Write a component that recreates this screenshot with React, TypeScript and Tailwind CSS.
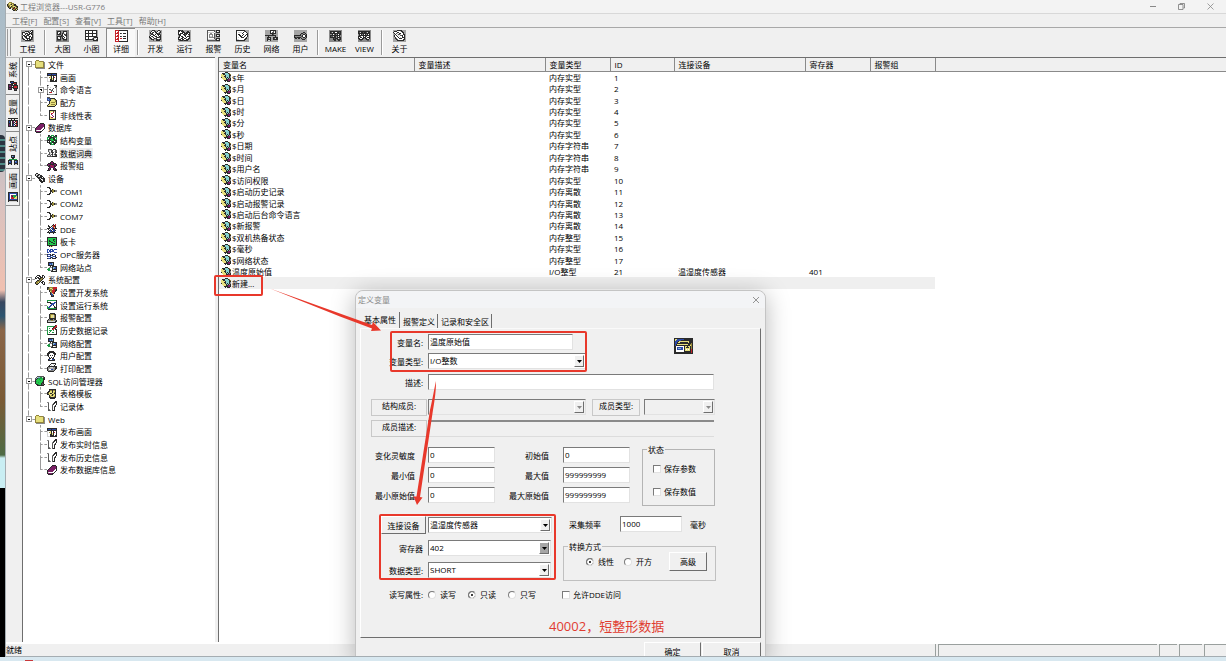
import { useState, type ReactNode } from "react"
import clsx from "clsx"

const palette: Record<string, string> = {
  k: "#2a2a2a",
  d: "#565656",
  g: "#8a8a8a",
  a: "#a6a6a6",
  l: "#d2d2d2",
  w: "#ffffff",
  y: "#e6df7c",
  o: "#94863a",
  r: "#c4232b",
  b: "#2c4aa8",
  s: "#7fb4cf",
  c: "#86d3d0",
  n: "#1f9a45",
  e: "#22cc4c",
  m: "#7a1f66",
}

const icons: Record<string, string[]> = {
  logo: ["..ooo.......", ".oyyooo.....", "koyokyokk...", "kooyyookko..", "okoykoyyokk.", ".kokoookyok.", "..kk.okroko.", ".....kookyk.", "......kkok.."],
  folder: ["..........", ".ooo......", "oyyyoooog.", "oyyyyyyyog", "oyyyyyyyog", "oyyyyyyyog", "oyyyyyyyog", "oyyyyyyyog", "ooooooooog", ".ggggggggg"],
  screen: ["..........", "kkkkkkkkkk", "kbbbkbbbbk", "kkkkkkkkkk", "lwwykwkwwk", "lwoykwkrwk", "lwwykykwwk", "lwwkkykwwk", "lwwkkkkwkk", "lllkkkkkkk"],
  script: ["kg.....kkk", "g.......gk", "glwlwwwwdg", "gwwwwwdwwg", "gwddwdwwwg", "gwwlddwwwg", "gwwwdwdwwg", "gwdrrwwwwg", "gwwwwwwwwg", "kgggggggkk"],
  recipe: ["ddd.......", "bbdkkkkk..", "bsbbyyyok.", "dbbkyyyyok", "..kyyyyyok", "..kyooooyk", "..kyyyyyyk", ".kyyooooyk", "kyyyyyyyk.", "okkkkkkk.."],
  curve: ["..kkkkkkk.", "..kyyydyk.", "..kywwrwk.", "..kwrrwwk.", "..kwmwwwk.", "..kwwmwwk.", "..kywwmwk.", "..kyrmwwk.", "..kyyyyyk.", "..kkkkkkk."],
  db: [".....kkkk.", "....kmmmmk", "...kmmmmmk", "..kmmmmmmk", ".kmmmmmmwk", "kmmmmmmwwk", "kmmmmmwwk.", "klwwwwwk..", "kmmmmkk...", ".kkkkk...."],
  struct: [".kk.nnn.kk", ".kdkn.nkdk", "nnnkkkknnn", "n.kknekk.n", "nnkeeekknn", "kkkkneekkk", "kwk.nkk.nk", "kkknnkkkkk", "..kkn.nkk.", "...knnnk.."],
  dict: ["..........", ".dddd.ddd.", ".dlldkwwdd", ".dlwkdwldd", "..dldkdwdk", "..dlwkwld.", ".ddldkldkd", "dlldwdwldk", "dddddkkkkk", ".........."],
  alarm: ["....kk....", "...kmmk...", ".kkkmmkkk.", "kmmkkkkmmk", "kmkmrmmkmk", ".kkmmrmkk.", "..kmmmmk..", ".kmk..kmk.", ".kmk..kmkk", "kkk....kkk"],
  device: [".kk.......", "kllkk.....", "klkklkk...", ".kkllkkk..", "..kkkkkwk.", "...kklkkkk", "....kkwlkk", "....kkkwkk", ".....kkkkk", "......kk.."],
  com: ["..........", "kkk.......", "..kk......", "...k.ky...", "...kkookgg", "...kkookgg", "...k.ky...", "..kk......", "kkk.......", ".........."],
  dde: ["......k.r.", ".k...krkr.", ".kk.kyrrk.", "..kkwbryk.", "kkkwbbkrkk", ".kwbwkbk..", "..kbkwbbk.", ".kwbbkbk..", "kkkkkkkkk.", "..k...k..."],
  card: ["kkkkkkkkkk", "keeeeeeeek", "keeeeekkek", "kekeeekeek", "kekkeeekek", "keeekkeeek", "kekeeekkek", "keeeeeeeek", "kkkkkkkkkk", "..kyky...."],
  opc: ["bb.bbb.bbb", "b.bb.bb...", "b.bbbbb...", "bb.b...bbb", "..........", "kbbk.kkb..", "b..kbk..k.", "kbbb.sbbk.", "...bkb..bk", "kbbk.kkkk."],
  net: [".kkkkkk...", ".kbbbsk...", ".kbsbsk...", ".kkkkkk...", "...kwkkkkk", "..gggkssbk", ".nn..ksbbk", "nnn..kkkkk", ".nnggkwwlk", "....kkkkkk"],
  tools: ["..kkk..kk.", ".kwwkk.kwk", "kwkkwkkkwk", "kk.kkkook.", "....kook..", "..kkook...", ".koook.kk.", "kooyk.kkwk", "kook...kwk", ".kk.....kk"],
  devset: ["kkoooorrrr", "kdoyyorrrr", "kooooyrrdk", "..koorrrkk", "..kyorrrk.", "...korrk..", "...kbyrk..", "...kbby...", "....kbk...", "....kkk..."],
  runset: ["nnnnnnnnnk", "nwwwwwwwwk", "kkkkwwwbbk", "wwwkkbbbwk", "wwwwbbbwwk", "wwwbbwkwwk", "nwbbwwwkwk", "nbbwwwwkkk", "nnnnnnnnnk", ".kkkkkkkkk"],
  bell: ["...kkkkk..", "..kooookk.", "..koyylok.", "..koyylok.", "..koyylok.", "..kkkkkkk.", ".kgkkkgkk.", "kgggoogggk", "klllllllkk", "kkkkkkkkk."],
  hist: ["........kr", "nnnnnnnkrr", "nwwwwwkrrk", "nwnwwkrrk.", "nwwwwrrwkk", "nwnnnwnwwk", "nwwnwwwwwk", "nwnwwnnwwk", "nwwwwwwwwk", "nkkkkkkkkk"],
  user: ["..kkkkk...", ".kkkkkkk..", "kkkwwwkkk.", "kkwwwwwkk.", "kkwkwkwk..", ".kwwwwwk..", "..kwkwk...", "..kkwkk...", ".kbwwbbk..", ".kkkkkkk.."],
  print: ["....kkkkk.", "...kwwlwk.", "..kwlwwk..", ".kkkkkkkkk", "kgglllgakk", "kaaaaaagkk", "kgwwbbagk.", "kggggggk..", ".kkkkkk...", ".........."],
  sql: ["..ddddddd.", ".dlssnnldk", "dsknnnnekk", "dkeeneeekk", "keeeeneek.", "kneeeeenk.", "keeneeekk.", "kneeeekdk.", ".kkneekddk", "..kkkkkkk."],
  template: ["..kkkkkkk.", "..kookook.", ".kkyykyyk.", "kkyyykyok.", "koykkyykk.", "kkyyykoyk.", "..kyokyyk.", "..koyyyok.", "..kkkkkkk.", "...kkkkk.."],
  record: ["........kk", "gg.....kkk", ".d....dk.k", ".d...gk..k", ".d...d..k.", ".d...d.dk.", ".d...d.k..", ".d...d.k..", ".dg..d.k..", ".ddg.dkk.."],
  tag: ["....kkk...", ".kkkcccko.", "yykkccccko", "yyyykccckk", "yyykkccckg", "kyyykckckg", ".yyyykckgk", "..yyykkmmk", "...kkkkmmk", "....k.kkk."],
  sideSys: ["..kkkk....", "..kbbkkkk.", "...kkkrrk.", "kkkkk.kkk.", "kmmkkkkkkk", "kmmk.krrrk", "kkkkkkrrrk", "kmmk.kkkkk", "kkkk..kmk.", "......kkk."],
  sideVar: ["kkkkkkkkkk", "...k..k...", "kkkkkkkkkk", "kbk.km.krk", "kbk.kmk.rk", "kkk.kk.kkk", "kmk.kbk.rk", "kmk.kb.krk", "kkkkkkkkkk", ".........."],
  sideSite: ["...kkkk...", "...ksbk...", "...kkkk...", "....kk....", ".nnnnnnnn.", "kkkk..kkkk", "ksbk..ksbk", "kbbk..kbbk", "kkkk..kkkk", "kllk..kllk"],
  sideScreen: ["kkkkkkkkkk", "kbbbbbbbbk", "kbwwwwwwbk", "kbwmmnnnbk", "kbwmkennyk", "kbwrrreyyk", "kbwrrryyyk", "kbbbbbbbbk", "kkkkkkkkkk", "kllllllllk"],
  preview: ["kkkkkkkkkkkkkkkkkkk", "kyybbbbbbbkkkkkkkkk", "kybbbbbkkkkkkkkkkkk", "kbbbkyyyyyyyyyykkkk", "kbbkyykkkkkkkkykkkk", "kbbkkkkkkkkkkkkkkok", "kbkyyyyyyyyyyykkook", "kbkkkkkkkkkkkkkkyok", "kkwwwwwwwwkyykyykok", "kkwbbbbbbwkykkkykok", "kkwbsssbbwkyyyyykok", "kkwbbbbbbwkywywykrk", "kkwwwwwwwwkyyyyykrk", "kkwwwwwwwwkkkkkkkrk", "kkkkkkkkkkkkkkkkkrk", "kkkkkkkkkkkkkkkkkkk"],
  tProject: ["aaaaaaaaaakka", "aaaakkkkakwka", "akkkwlwdkwkka", "akwldkkwkkkda", "akwwkwdkkwkka", "aakkwdkkwlwka", "akwkkkwlkkwka", "akwlkkwwkwkka", "akdwlkkkkwkda", "aakkwwkwkkkda", "aaaakkkkkkaaa", "aaaaaaaaaaaaa"],
  tLarge: ["ggggggggggggg", "gkkkkggkkkkgg", "gklwkggkwwdgg", "gkwdkgkdlwkgg", "gkkkkgkwkdkgg", "gggggkkwlkkgg", "gkkkkkdkwwkgg", "gkwlkgkwkwdgg", "gklwkgkklwkgg", "gkkkkggkkkkgg", "gddddggddddgg", "ggggggggggggg"],
  tSmall: ["kkkkkkkkkkkka", "kwwkwwwkwwwka", "kwwkwwwkwwwka", "kkkkkkkkkkkka", "kwwkwwwkwwwka", "kwwkwwwkwwwka", "kkkkkkkkkkkka", "kwwkwwwwgkkkk", "kwwkwwwgkllwk", "kkkkkkkkklwdk", "aaaaaaaakkkkk", "aaaaaaaaaaaaa"],
  tDetail: ["rrrrkkkkkkkkk", "rwwrwwwwwwwwk", "rwrrwwwwwwwwk", "rrrrwkdwkkkwk", "rwwrwwwwwwwwk", "rwrrwwwwwwwwk", "rrrrwkdwkkkwk", "rwwrwwwwwwwwk", "rwrrwrrwkkkwk", "rrrrwwwwwwwwk", "rwwrwwwwwwwwk", "rrrrkkkkkkkkk"],
  tDev: ["aaakkkaaakkaa", "aakwwdkakwlka", "akwdkwkkwldka", "akdkwwlkkdkaa", "aakkdwkwkkkda", "akwwkkwlwkwka", "kwdkwlkkwlkka", "kkwlkwwdkkdka", "akkwlkdkwwlka", "aakkkaakkdkka", "aaaadaakkkkaa", "aaaaaaaaaaaaa"],
  tRun: ["kkkdkaaaaaaaa", "kkwkkkaaakkaa", "kwwwkkkakkkka", "kwkkkwkkkkwka", "kkkwwkkdkwkka", "akkwwwkkwwlka", "akwkkwwkwkkka", "kkwwkkwwkwwka", "kwlkkwkkwwkka", "kkkwkkwwkkkaa", "adkkkdkkkkaaa", "aaaaaaaaaaaaa"],
  tAlarm: ["ddddddddakkkk", "dwwwwwwdakwlk", "dllllllwakkkk", "dwwggwwdaaaaa", "dwggggwdakkkk", "dwgwwgwdakwlk", "dwgllgwdakkkk", "dwgggggdaaaaa", "dwwwwwwdakkkk", "dllllllldkwlk", "dddddddddkkkk", "aaaaaaaaaaaaa"],
  tHistory: ["kkkkkkkkkaaaa", "kwwwwwwwdkaaa", "kwllllwkwwkaa", "kwwwwwkwwwwka", "kwkkwwwkwwkka", "kwwkkwkwwkwka", "kwwwkkwwkwwka", "kwlwwkkkwwkaa", "kwwwwwwwwkkaa", "kllwwwwwkkaaa", "kkkkkkkkkaaaa", "aaaaaaaaaaaaa"],
  tNet: ["aaaaakkkkkkaa", "aaaaakwwdlkaa", "aaaaakwddwkaa", "aaaaakkkkkkaa", "aaaaaaakdaaaa", "kkkkkkkkkkkaa", "aaakaaaaaakaa", "aakkkkaakkkkk", "aakdlkaakdlkk", "aakkkkaakkkkk", "aakllkaaaaaaa", "aaaaaaaaaaaaa"],
  tUser: ["aaaaaaaaaaaaa", "aaaaaaaaaaaaa", "aaaaaaaaakkaa", "aaaaaaakkggka", "aaaaaakggkkgk", "kkkkkkkgkwwkk", "kggggggdkwwkk", "kkdkkkkggkkgk", "akkakkakgggka", "aaaaaaaakkkaa", "aaaaaaaaaaaaa", "aaaaaaaaaaaaa"],
  tMake: ["ggggggggggggg", "gkkkkkkkkkkkg", "gkdlkkwwkkdkg", "gkkkkkkkkkkkg", "gggkwdkgkwkkg", "gkkkkkkkkkkgg", "gkddlkkgkwkgg", "gkkkkkkgkkkkg", "ggggkdkkkldkg", "ggggkkkgkkkkg", "gggggkkggkkgg", "ggggggggggggg"],
  tView: ["ggggggggggggg", "kkkkkkkkkkkkg", "kdlkkdkkdlkkg", "kkkkkkkkkkkkg", "gkwkgkwkgkwkg", "gkkkkkkkkkkkg", "kkdwwkwkdwwkg", "kwkkwkkkwkkkg", "kkwwkkgkkwwkg", "gkkkkgggkkkgg", "ggddgggggddgg", "ggggggggggggg"],
  tAbout: ["aaaakkkkkaaaa", "akkkwwwlkkaaa", "kwwwkkwwwkkaa", "akwdlwkkwwkaa", "aakwlddlwwkka", "akwkwlwddkwka", "akwwkwlwwkwka", "aakwwkwlwkkka", "aakdwwkkkwwka", "aaakdwwwwwkka", "aaaakkkkkkkaa", "aaaaaaaaaaaaa"],
}

function Pixels({ name }: { name: string }) {
  const rows = icons[name]
  const width = rows[0].length
  return (
    <svg
      width={width}
      height={rows.length}
      viewBox={`0 0 ${width} ${rows.length}`}
      shapeRendering="crispEdges"
      className="shrink-0"
      aria-hidden="true"
    >
      {rows.flatMap((row, y) =>
        row.split("").map((c, x) =>
          palette[c] ? <rect key={`${x}-${y}`} x={x} y={y} width="1" height="1" fill={palette[c]} /> : null
        )
      )}
    </svg>
  )
}

const menus = ["工程[F]", "配置[S]", "查看[V]", "工具[T]", "帮助[H]"]

const toolGroups = [
  [["tProject", "工程"]],
  [["tLarge", "大图"], ["tSmall", "小图"], ["tDetail", "详细"]],
  [["tDev", "开发"], ["tRun", "运行"], ["tAlarm", "报警"], ["tHistory", "历史"], ["tNet", "网络"], ["tUser", "用户"]],
  [["tMake", "MAKE"], ["tView", "VIEW"]],
  [["tAbout", "关于"]],
]

const sideTabs = [
  ["sideSys", "系统"],
  ["sideVar", "变量"],
  ["sideSite", "站点"],
  ["sideScreen", "画面"],
]

const tree = [
  { icon: "folder", label: "文件", items: [["screen", "画面"], ["script", "命令语言"], ["recipe", "配方"], ["curve", "非线性表"]] },
  { icon: "db", label: "数据库", items: [["struct", "结构变量"], ["dict", "数据词典"], ["alarm", "报警组"]] },
  {
    icon: "device",
    label: "设备",
    items: [["com", "COM1"], ["com", "COM2"], ["com", "COM7"], ["dde", "DDE"], ["card", "板卡"], ["opc", "OPC服务器"], ["net", "网络站点"]],
  },
  {
    icon: "tools",
    label: "系统配置",
    items: [
      ["devset", "设置开发系统"],
      ["runset", "设置运行系统"],
      ["bell", "报警配置"],
      ["hist", "历史数据记录"],
      ["net", "网络配置"],
      ["user", "用户配置"],
      ["print", "打印配置"],
    ],
  },
  { icon: "sql", label: "SQL访问管理器", items: [["template", "表格模板"], ["record", "记录体"]] },
  { icon: "folder", label: "Web", items: [["screen", "发布画面"], ["record", "发布实时信息"], ["record", "发布历史信息"], ["db", "发布数据库信息"]] },
]

const columns = ["变量名", "变量描述", "变量类型", "ID", "连接设备", "寄存器", "报警组"]

const variables = [
  ["$年", "内存实型", "1"],
  ["$月", "内存实型", "2"],
  ["$日", "内存实型", "3"],
  ["$时", "内存实型", "4"],
  ["$分", "内存实型", "5"],
  ["$秒", "内存实型", "6"],
  ["$日期", "内存字符串", "7"],
  ["$时间", "内存字符串", "8"],
  ["$用户名", "内存字符串", "9"],
  ["$访问权限", "内存实型", "10"],
  ["$启动历史记录", "内存离散", "11"],
  ["$启动报警记录", "内存离散", "12"],
  ["$启动后台命令语言", "内存离散", "13"],
  ["$新报警", "内存离散", "14"],
  ["$双机热备状态", "内存整型", "15"],
  ["$毫秒", "内存实型", "16"],
  ["$网络状态", "内存整型", "17"],
  ["温度原始值", "I/O整型", "21", "温湿度传感器", "401"],
  ["新建..."],
]

function Branch({ up = true, down = true, stub = true, box }: { up?: boolean; down?: boolean; stub?: boolean; box?: "+" | "-" }) {
  return (
    <span className="relative flex w-3 shrink-0 self-stretch pl-[5px]">
      <span className="flex flex-1 flex-col">
        <span
          className={clsx(
            "flex-1 border-dashed border-[#9a9a9a]",
            up && "border-l",
            stub && "border-b"
          )}
        />
        <span className={clsx("flex-1 border-dashed border-[#9a9a9a]", down && "border-l")} />
      </span>
      {box && (
        <span className="absolute top-1/2 left-[3px] flex size-[6px] -translate-y-1/2 items-center justify-center border border-[#9a9a9a] bg-white">
          <span className="h-px w-[2px] bg-black" />
          {box === "+" && <span className="absolute h-[2px] w-px bg-black" />}
        </span>
      )}
    </span>
  )
}

function Tree() {
  const [selected, setSelected] = useState("数据词典")
  return (
    <nav className="flex h-[418px] flex-col" aria-label="工程目录">
      {tree.flatMap((group, g) => {
        const lastGroup = g === tree.length - 1
        return [
          <div key={group.label} className="flex min-h-0 flex-1 items-center">
            <Branch up={g > 0} down={!lastGroup} box="-" />
            <Pixels name={group.icon} />
            <button className="ml-[3px]">{group.label}</button>
          </div>,
          ...group.items.map(([icon, label], i) => (
            <div key={group.label + label} className="flex min-h-0 flex-1 items-center">
              <Branch up={!lastGroup} down={!lastGroup} stub={false} />
              <Branch down={i < group.items.length - 1} box={label === "命令语言" ? "+" : undefined} />
              <Pixels name={icon} />
              <button
                onClick={() => setSelected(label)}
                className={clsx("ml-[2px] px-px", selected === label && "bg-[#ececec]")}
              >
                {label}
              </button>
            </div>
          )),
        ]
      })}
    </nav>
  )
}

function VariableTable() {
  return (
    <table className="h-[231px] w-full table-fixed border-collapse text-left">
      <colgroup>
        <col className="w-[195px]" />
        <col className="w-[131px]" />
        <col className="w-[65px]" />
        <col className="w-[64px]" />
        <col className="w-[131px]" />
        <col className="w-[65px]" />
        <col className="w-[65px]" />
        <col />
      </colgroup>
      <thead>
        <tr className="h-[13px] bg-[#f0f0f0]">
          {columns.map((c) => (
            <th key={c} className="h-[13px] border-r border-b border-[#8a8a8a] py-0 pr-0 pl-1 font-normal">
              {c}
            </th>
          ))}
          <td className="border-b border-[#8a8a8a]" />
        </tr>
      </thead>
      <tbody>
        {variables.map(([name, type, id, device, register]) => {
          const bg = name === "新建..." ? "bg-[#efefef]" : ""
          return (
            <tr key={name}>
              <td className={clsx("p-0 pl-[2px]", bg)}>
                <span className="flex items-center gap-px">
                  <Pixels name="tag" />
                  {name}
                </span>
              </td>
              <td className={bg} />
              <td className={clsx("p-0 pl-1", bg)}>{type}</td>
              <td className={clsx("p-0 pl-1", bg)}>{id}</td>
              <td className={clsx("p-0 pl-1", bg)}>{device}</td>
              <td className={clsx("p-0 pl-1", bg)}>{register}</td>
              <td className={bg} />
              <td />
            </tr>
          )
        })}
      </tbody>
    </table>
  )
}

const sunken = "border border-t-[#7a7a7a] border-l-[#7a7a7a] border-r-[#e2e2e2] border-b-[#e2e2e2]"
const raised = "border border-t-white border-l-white border-r-[#6e6e6e] border-b-[#6e6e6e]"

function TextField({ id, value, className }: { id: string; value?: string; className: string }) {
  return <input id={id} defaultValue={value} className={clsx("h-4 bg-white px-px pb-[2px] outline-none", sunken, className)} />
}

function Picker({ id, value, className, disabled, dark }: { id: string; value?: string; className: string; disabled?: boolean; dark?: boolean }) {
  return (
    <span className={clsx("relative flex h-4 shrink-0", sunken, disabled ? "bg-[#f0f0f0]" : "bg-white", className)}>
      <select id={id} disabled={disabled} className="min-w-0 flex-1 appearance-none bg-transparent px-px pb-px outline-none">
        <option>{value}</option>
      </select>
      <span
        className={clsx(
          "pointer-events-none absolute top-px right-px bottom-px flex w-[10px] items-center justify-center",
          raised,
          dark ? "bg-[#a6a6a6]" : "bg-[#f0f0f0]"
        )}
      >
        <svg width="5" height="3" viewBox="0 0 5 3">
          <path d="M0 0h5L2.5 3z" fill={disabled ? "#8a8a8a" : "#000"} />
        </svg>
      </span>
    </span>
  )
}

function Label({ htmlFor, className, children }: { htmlFor: string; className?: string; children: ReactNode }) {
  return (
    <label htmlFor={htmlFor} className={clsx("shrink-0 text-right", className)}>
      {children}
    </label>
  )
}

function Check({ label }: { label: string }) {
  return (
    <label className="flex items-center gap-[3px]">
      <input type="checkbox" className={clsx("size-2 shrink-0 appearance-none bg-white checked:bg-black", sunken)} />
      {label}
    </label>
  )
}

function Radio({ name, label, checked }: { name: string; label: string; checked?: boolean }) {
  return (
    <label className="flex items-center gap-1">
      <input
        type="radio"
        name={name}
        defaultChecked={checked}
        className={clsx("size-2 shrink-0 appearance-none rounded-full bg-white checked:bg-black checked:shadow-[inset_0_0_0_2px_#fff]", sunken)}
      />
      {label}
    </label>
  )
}

function DefineDialog() {
  return (
    <div
      role="dialog"
      aria-label="定义变量"
      className="absolute top-[290px] left-[355px] w-[411px] rounded-t-lg border border-[#c4c4c4] bg-[#f0f0f0] shadow-[0_4px_24px_rgba(0,0,0,0.28)]"
    >
      <header className="flex h-[17px] items-center justify-between rounded-t-lg bg-[#f3f4f6] pr-[5px] pl-[2px] text-[#8a8a8a]">
        <span>定义变量</span>
        <button aria-label="关闭">
          <svg width="8" height="8" viewBox="0 0 8 8" stroke="#8a8a8a" strokeWidth="0.9">
            <path d="M1 1l6 6M7 1l-6 6" />
          </svg>
        </button>
      </header>

      <div className="flex h-5 items-end pt-1 pl-1">
        <button className="h-4 border-r border-[#6e6e6e] pr-[3px] pb-px pl-1">基本属性</button>
        <button className="h-[14px] border-r border-[#6e6e6e] pr-[2px] pl-[3px]">报警定义</button>
        <button className="h-[14px] border-r border-[#6e6e6e] pr-[2px] pl-[3px]">记录和安全区</button>
      </div>

      <form className="mx-1 h-[310px] border border-t-[#fafafa] border-r-[#6e6e6e] border-b-[#6e6e6e] border-l-white pt-[5px]">
        <div className="flex items-start">
          <div className="flex flex-col gap-[3px]">
            <div className="flex items-center gap-[5px]">
              <Label htmlFor="name" className="w-[62px]">变量名:</Label>
              <TextField id="name" value="温度原始值" className="w-[145px]" />
            </div>
            <div className="flex items-center gap-[5px]">
              <Label htmlFor="type" className="w-[62px]">变量类型:</Label>
              <Picker id="type" value="I/O整数" className="w-[158px]" />
            </div>
          </div>
          <span className="mt-1 ml-[88px]">
            <Pixels name="preview" />
          </span>
        </div>
        <div className="mt-[5px] flex items-center gap-[5px]">
          <Label htmlFor="desc" className="w-[62px]">描述:</Label>
          <TextField id="desc" className="w-[286px]" />
        </div>

        <div className="mt-[9px] flex gap-px pl-[10px]">
          <Label htmlFor="member" className="h-[17px] w-14 border border-[#c8c8c8] pr-[10px]">结构成员:</Label>
          <Picker id="member" className="w-[158px]" disabled />
          <Label htmlFor="memberType" className="ml-[5px] h-[17px] w-12 border border-[#c8c8c8] pr-[6px]">成员类型:</Label>
          <Picker id="memberType" className="ml-[3px] w-[71px]" disabled />
        </div>
        <div className="mt-1 flex gap-px pl-[10px]">
          <Label htmlFor="memberDesc" className="h-[17px] w-14 border border-[#c8c8c8] pr-[10px]">成员描述:</Label>
          <input id="memberDesc" disabled className="h-[17px] w-[286px] border-t-2 border-b border-t-[#8a8a8a] border-b-[#dcdcdc]" />
        </div>

        <div className="mt-[7px] flex">
          <div className="flex flex-col gap-1 pt-[3px]">
            {[
              ["变化灵敏度", "0", "初始值", "0"],
              ["最小值", "0", "最大值", "999999999"],
              ["最小原始值", "0", "最大原始值", "999999999"],
            ].map(([left, low, right, high]) => (
              <div key={left} className="flex items-center">
                <Label htmlFor={left} className="mr-[13px] w-[54px]">{left}</Label>
                <TextField id={left} value={low} className="w-[67px]" />
                <Label htmlFor={right} className="mr-[14px] w-[54px]">{right}</Label>
                <TextField id={right} value={high} className="w-[67px]" />
              </div>
            ))}
          </div>
          <fieldset className="ml-3 h-[62px] w-[73px] border border-[#b4b4b4] px-[10px]">
            <legend className="-ml-[6px] px-px">状态</legend>
            <div className="flex flex-col gap-3 pt-2">
              <Check label="保存参数" />
              <Check label="保存数值" />
            </div>
          </fieldset>
        </div>

        <div className="mt-[10px] flex">
          <div className="flex flex-col gap-[6px]">
            <div className="flex items-center gap-[2px] pl-5">
              <button type="button" className={clsx("h-[18px] w-[45px]", raised)}>连接设备</button>
              <Picker id="device" value="温湿度传感器" className="w-[124px]" />
            </div>
            <div className="flex items-center gap-[5px]">
              <Label htmlFor="register" className="w-[62px]">寄存器</Label>
              <Picker id="register" value="402" className="w-[123px]" dark />
            </div>
            <div className="flex items-center gap-[5px]">
              <Label htmlFor="dataType" className="w-[62px]">数据类型:</Label>
              <Picker id="dataType" value="SHORT" className="w-[123px]" />
            </div>
          </div>
          <div className="ml-[11px] flex flex-col gap-[9px]">
            <div className="flex items-center pl-[6px]">
              <Label htmlFor="rate">采集频率</Label>
              <TextField id="rate" value="1000" className="mr-2 ml-[19px] w-[62px]" />
              <span>毫秒</span>
            </div>
            <fieldset className="h-[40px] w-[153px] border border-[#c0c0c0]">
              <legend className="ml-1 px-px">转换方式</legend>
              <div className="flex items-center pr-2 pl-[22px]">
                <Radio name="convert" label="线性" checked />
                <span className="ml-[10px]">
                  <Radio name="convert" label="开方" />
                </span>
                <button type="button" className={clsx("ml-auto h-[19px] w-[38px]", raised)}>高级</button>
              </div>
            </fieldset>
          </div>
        </div>

        <div className="mt-2 flex items-center">
          <span className="mr-[5px] w-[62px] text-right">读写属性:</span>
          <div className="flex gap-3">
            <Radio name="access" label="读写" />
            <Radio name="access" label="只读" checked />
            <Radio name="access" label="只写" />
          </div>
          <span className="ml-[26px]">
            <Check label="允许DDE访问" />
          </span>
        </div>
        <p className="mt-4 pl-[188px] text-[13px] leading-5 text-[#e03c30]">40002，短整形数据</p>
      </form>

      <footer className="mt-1 flex justify-end gap-px pr-1">
        <button className={clsx("h-[18px] w-[57px]", raised)}>确定</button>
        <button className={clsx("h-[18px] w-[59px]", raised)}>取消</button>
      </footer>
    </div>
  )
}

function Marks() {
  return (
    <svg width="600" height="600" viewBox="0 0 600 600" className="pointer-events-none absolute top-0 left-0" aria-hidden="true">
      <g fill="none" stroke="#e8382b" strokeWidth="2">
        <rect x="215" y="276" width="47" height="19" rx="1" />
        <rect x="391" y="332" width="195" height="39" rx="1" />
        <rect x="380" y="515" width="175" height="64" rx="1" />
      </g>
      <g fill="#e8382b">
        <path d="M270 288.500L372 325L373 322L381 330.500L371 331L372 328.500L340 316.500z" />
        <path d="M436 381C436 390 435 398 433 410L420 497L422.500 497.500L417 505L413.500 496.500L416.500 496.500L430 410C433 397 434 390 436 381z" />
      </g>
    </svg>
  )
}

export default function App() {
  return (
    <div className="flex h-screen flex-col overflow-hidden bg-[#d8e8f0] font-['Open_Sans','Noto_Sans_CJK_SC',sans-serif] text-[8px] leading-[11px] text-black">
      <div className="flex min-h-0 flex-1">
        <div className="flex w-[5px] flex-col bg-[linear-gradient(#a9bcc8_0,#b4bfc8_120px,#d9c2c0_200px,#f0c0b0_290px,#37475f_302px,#2b5470_316px,#8a6548_330px,#7a5a35_400px,#4e6b45_455px,#c9eef3_458px,#c9eef3_488px,#000_488px)] pt-[135px]">
          <span className="h-[37px] rounded-r-sm bg-[repeating-linear-gradient(#2c3440_0_4px,#4f8a86_4px_6px)]" />
        </div>

        <main className="relative flex min-w-0 flex-1 flex-col border-b border-l border-[#a5adb2] bg-[#f0f0f0]">
          <header className="flex h-[14px] items-center border-b border-[#d8d8d8] bg-[#f3f3f3] pr-3 pl-px text-[#7d7d7d]">
            <Pixels name="logo" />
            <h1 className="ml-px">工程浏览器---USR-G776</h1>
            <div className="ml-auto flex items-center gap-[22px]">
              <button aria-label="最小化" className="h-px w-[6px] bg-[#888]" />
              <button aria-label="还原">
                <svg width="7" height="7" viewBox="0 0 7 7" fill="none" stroke="#777" strokeWidth="0.8">
                  <path d="M2 1.500V.5h4.500v4.500h-1M.5 1.500h4.500v5H.5z" />
                </svg>
              </button>
              <button aria-label="关闭">
                <svg width="7" height="7" viewBox="0 0 7 7" stroke="#888" strokeWidth="0.8">
                  <path d="M.5 .5l6 6M6.500 .5l-6 6" />
                </svg>
              </button>
            </div>
          </header>

          <nav className="flex h-[14px] items-center gap-[6px] border-b border-[#a8a8a8] pl-[6px] text-[#777]">
            {menus.map((m) => (
              <button key={m}>{m}</button>
            ))}
          </nav>

          <div className="flex h-[29px] items-stretch">
            <span className="my-px mr-[2px] ml-px w-1 border-x border-[#9a9a9a]" />
            {toolGroups.map((group, i) => (
              <div key={i} className="flex">
                {i > 0 && <span className="mx-[2px] my-[2px] w-[2px] border-l border-[#9a9a9a] bg-white" />}
                {group.map(([icon, label]) => (
                  <button
                    key={label}
                    className={clsx(
                      "flex w-[29px] flex-col items-center",
                      label === "详细" ? "border-t border-l border-[#8a8a8a] bg-[#f9f9f9] pt-px" : "pt-[2px]"
                    )}
                  >
                    <Pixels name={icon} />
                    <span className="mt-px">{label}</span>
                  </button>
                ))}
              </div>
            ))}
          </div>

          <div className="flex min-h-0 flex-1">
            <aside className="w-4 border-t border-[#b8b8b8]">
              {sideTabs.map(([icon, label]) => (
                <button
                  key={label}
                  className="flex h-[37px] w-[14px] flex-col items-center justify-center gap-[3px] border-r border-b border-[#8a8a8a]"
                >
                  <span className="rotate-180 [text-orientation:sideways] [writing-mode:vertical-rl]">{label}</span>
                  <Pixels name={icon} />
                </button>
              ))}
            </aside>
            <section className="w-[193px] border-t border-l border-[#6e6e6e] bg-white">
              <Tree />
            </section>
            <section className="ml-[3px] min-w-0 flex-1 border-t border-l border-[#6e6e6e] bg-white">
              <VariableTable />
            </section>
          </div>

          <footer className="flex h-[14px] gap-[2px] border-t-2 border-white">
            <span className="w-[930px] shrink-0 border-r border-[#9aa09e]">就绪</span>
            <span className="flex-1 border-t border-l border-[#9aa09e]" />
            <span className="w-[18px] border-t border-l border-[#9aa09e]" />
            <span className="w-[23px] border-t border-l border-[#9aa09e]" />
            <span className="w-[22px] border-t border-l border-[#9aa09e]" />
          </footer>
        </main>
      </div>

      <footer className="z-10 flex h-1 items-end bg-[#d8e8f0] pl-[25px]">
        <span className="h-px w-2 bg-[#c8383a]" />
      </footer>

      <div className="pointer-events-none absolute inset-x-0 top-0 bottom-[5px] overflow-hidden *:pointer-events-auto">
        <DefineDialog />
      </div>
      <Marks />
    </div>
  )
}
